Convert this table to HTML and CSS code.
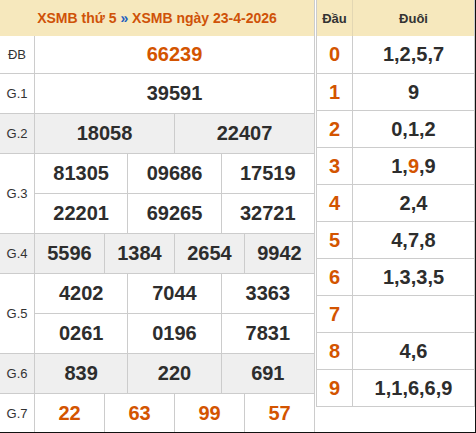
FILE: index.html
```html
<!DOCTYPE html>
<html lang="vi">
<head>
<meta charset="utf-8">
<title>XSMB</title>
<link rel="stylesheet" href="styles.css">
</head>
<body>
<div class="wrap">
  <div class="kq">
    <div class="kq-head">XSMB thứ 5 <span class="sep">»</span> XSMB ngày 23-4-2026</div>
    <div class="row r-db"><div class="lbl">ĐB</div><div class="cells"><div class="line"><div class="cell hot">66239</div></div></div></div>
    <div class="row"><div class="lbl">G.1</div><div class="cells"><div class="line"><div class="cell">39591</div></div></div></div>
    <div class="row gray"><div class="lbl">G.2</div><div class="cells"><div class="line"><div class="cell">18058</div><div class="cell">22407</div></div></div></div>
    <div class="row"><div class="lbl">G.3</div><div class="cells">
      <div class="line"><div class="cell">81305</div><div class="cell">09686</div><div class="cell">17519</div></div>
      <div class="line"><div class="cell">22201</div><div class="cell">69265</div><div class="cell">32721</div></div>
    </div></div>
    <div class="row gray"><div class="lbl">G.4</div><div class="cells"><div class="line"><div class="cell">5596</div><div class="cell">1384</div><div class="cell">2654</div><div class="cell">9942</div></div></div></div>
    <div class="row"><div class="lbl">G.5</div><div class="cells">
      <div class="line"><div class="cell">4202</div><div class="cell">7044</div><div class="cell">3363</div></div>
      <div class="line"><div class="cell">0261</div><div class="cell">0196</div><div class="cell">7831</div></div>
    </div></div>
    <div class="row gray"><div class="lbl">G.6</div><div class="cells"><div class="line"><div class="cell">839</div><div class="cell">220</div><div class="cell">691</div></div></div></div>
    <div class="row r-last"><div class="lbl">G.7</div><div class="cells"><div class="line"><div class="cell hot">22</div><div class="cell hot">63</div><div class="cell hot">99</div><div class="cell hot">57</div></div></div></div>
  </div>
  <div class="loto">
    <div class="lrow lhead"><div class="dau">Đầu</div><div class="duoi">Đuôi</div></div>
    <div class="lrow first"><div class="dau">0</div><div class="duoi">1,2,5,7</div></div>
    <div class="lrow"><div class="dau">1</div><div class="duoi">9</div></div>
    <div class="lrow"><div class="dau">2</div><div class="duoi">0,1,2</div></div>
    <div class="lrow"><div class="dau">3</div><div class="duoi">1,<span class="hot">9</span>,9</div></div>
    <div class="lrow"><div class="dau">4</div><div class="duoi">2,4</div></div>
    <div class="lrow"><div class="dau">5</div><div class="duoi">4,7,8</div></div>
    <div class="lrow"><div class="dau">6</div><div class="duoi">1,3,3,5</div></div>
    <div class="lrow"><div class="dau">7</div><div class="duoi"></div></div>
    <div class="lrow"><div class="dau">8</div><div class="duoi">4,6</div></div>
    <div class="lrow"><div class="dau">9</div><div class="duoi">1,1,6,6,9</div></div>
  </div>
</div>
</body>
</html>
```

FILE: styles.css
```css
* { box-sizing: border-box; }
html, body { margin: 0; padding: 0; background: #fff; }
body { font-family: "Liberation Sans", Arial, sans-serif; color: #333; }

.wrap {
  width: 476px;
  height: 433px;
  display: flex;
  align-items: flex-start;
  gap: 1px;
  border-right: 1px solid #111;
  border-bottom: 1px solid #111;
  overflow: hidden;
}

.kq {
  width: 315px;
  height: 432px;
  border-right: 1px solid #ccc;
  flex: none;
}
.kq-head {
  height: 36px;
  line-height: 36px;
  background: #f6e8bd;
  color: #cf5208;
  font-weight: bold;
  font-size: 14px;
  text-align: center;
  white-space: nowrap;
}
.kq-head .sep { color: #1f5fbf; }

.row {
  display: flex;
  border-bottom: 1px solid #ccc;
}
.row.gray { background: #efefef; }
.row.r-last { border-bottom: none; }
.lbl {
  width: 35px;
  flex: none;
  border-right: 1px solid #ccc;
  display: flex;
  align-items: center;
  justify-content: center;
  font-size: 13px;
  color: #333;
}
.cells { flex: 1; display: flex; flex-direction: column; }
.line {
  display: flex;
  height: 39px;
}
.line + .line { height: 40px; border-top: 1px solid #ccc; }
.r-db .line { height: 37px; }
.r-last .line { height: 38px; }
.cell {
  flex: 1 1 0;
  display: flex;
  align-items: center;
  justify-content: center;
  font-weight: bold;
  font-size: 20px;
  color: #2d2d2d;
}
.cell + .cell { border-left: 1px solid #ccc; }
.hot, .cell.hot { color: #d35400; }

.loto {
  width: 159px;
  flex: none;
  border-left: 1px solid #ccc;
  border-right: 1px solid #ccc;
}
.lrow {
  display: flex;
  height: 37px;
  border-bottom: 1px solid #ccc;
}
.lrow.first { height: 38px; }
.lrow.lhead {
  height: 36px;
  border-bottom: none;
  background: #f6e8bd;
  font-size: 13px;
}
.dau {
  width: 36px;
  flex: none;
  border-right: 1px solid #ccc;
  display: flex;
  align-items: center;
  justify-content: center;
  font-weight: bold;
  font-size: 20px;
  color: #d35400;
}
.duoi {
  flex: 1;
  display: flex;
  align-items: center;
  justify-content: center;
  font-weight: bold;
  font-size: 20px;
  color: #2d2d2d;
}
.lhead .dau, .lhead .duoi { font-size: 13px; color: #333; }
.lhead .dau { border-right-color: #e3d7b3; }
```
